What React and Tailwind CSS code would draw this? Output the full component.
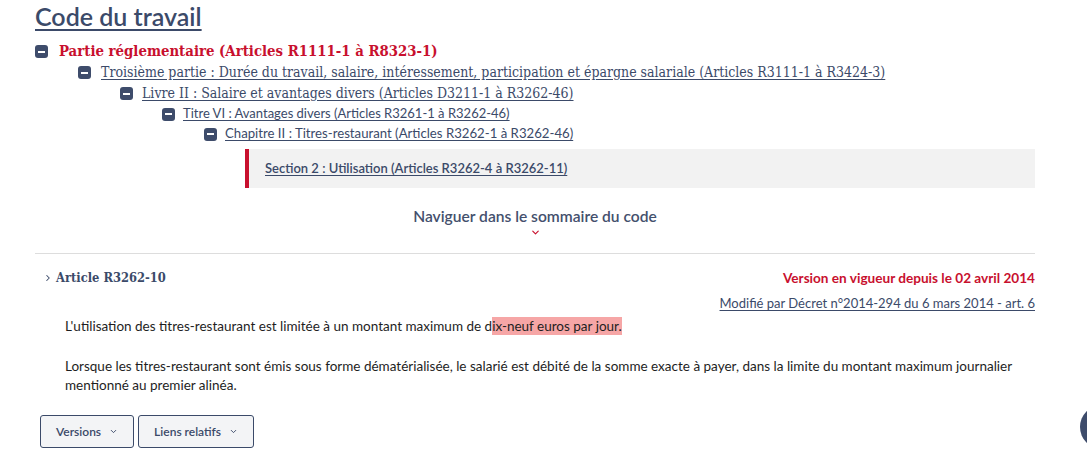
import { ChevronDown, ChevronRight } from 'lucide-react';

const sans = { fontFamily: 'Lato, "Liberation Sans", sans-serif' };
const slab = { fontFamily: '"DejaVu Serif Condensed", "DejaVu Serif", serif' };

function Toggle() {
  return (
    <span className="inline-flex items-center justify-center w-[13px] h-[13px] rounded-[3px] bg-[#3e4c6b] shrink-0">
      <span className="block w-[7px] h-[2px] bg-white" />
    </span>
  );
}

const tree = [
  { pad: 'pl-[43px]', gap: 'gap-[10px]', cls: 'text-[14px] h-[21px]', font: slab, label: 'Troisième partie : Durée du travail, salaire, intéressement, participation et épargne salariale (Articles R3111-1 à R3424-3)' },
  { pad: 'pl-[85px]', gap: 'gap-[9px]', cls: 'text-[14px] h-[21px]', font: slab, label: 'Livre II : Salaire et avantages divers (Articles D3211-1 à R3262-46)' },
  { pad: 'pl-[127px]', gap: 'gap-[8px]', cls: 'text-[13px] h-[20px]', font: sans, label: 'Titre VI : Avantages divers (Articles R3261-1 à R3262-46)' },
  { pad: 'pl-[169px]', gap: 'gap-[8px]', cls: 'text-[13.2px] h-[20px]', font: sans, label: 'Chapitre II : Titres-restaurant (Articles R3262-1 à R3262-46)' },
];

export default function App() {
  return (
    <div className="relative w-[1087px] h-[465px] overflow-hidden bg-white text-[#3b4a69]" style={sans}>
      <div className="w-[1000px] ml-[35px]">
        <h1 className="pt-[2px] text-[25px] leading-[29px] font-semibold underline decoration-[1.5px] underline-offset-[3px]">Code du travail</h1>

        {/* sommaire */}
        <div className="mt-[10px]">
          <div className="flex items-center gap-[11px] h-[21px]">
            <Toggle />
            <span className="text-[14.8px] font-bold text-[#c8102e]" style={slab}>Partie réglementaire (Articles R1111-1 à R8323-1)</span>
          </div>
          {tree.map((t) => (
            <div key={t.label} className={`flex items-center ${t.pad} ${t.gap} ${t.cls}`}>
              <Toggle />
              <span className="underline underline-offset-2 text-[#3b4a69]" style={t.font}>{t.label}</span>
            </div>
          ))}
          <div className="ml-[210px] mt-[5px] h-[39px] flex items-center bg-[#f2f2f2] border-l-4 border-[#c8102e] pl-4">
            <span className="text-[13px] font-semibold underline underline-offset-2">Section 2 : Utilisation (Articles R3262-4 à R3262-11)</span>
          </div>
        </div>

        <div className="flex flex-col items-center mt-[18px]">
          <span className="text-[15.6px] font-semibold leading-[20px] text-[#44506d]">Naviguer dans le sommaire du code</span>
          <ChevronDown size={11} strokeWidth={2.5} className="text-[#c8102e] mt-[1px]" />
        </div>

        <div className="mt-[15px] border-t border-[#dddddd]" />

        {/* article */}
        <div className="flex items-start justify-between mt-[14px]">
          <div className="flex items-center gap-[3px] ml-[8px]">
            <ChevronRight size={10} strokeWidth={2.5} />
            <span className="text-[12.8px] font-bold" style={slab}>Article R3262-10</span>
          </div>
          <div className="flex flex-col items-end">
            <span className="text-[13.6px] font-bold text-[#c8102e] leading-[20px]">Version en vigueur depuis le 02 avril 2014</span>
            <span className="mt-[5px] text-[13px] leading-[20px] underline underline-offset-2">Modifié par Décret n°2014-294 du 6 mars 2014 - art. 6</span>
          </div>
        </div>

        <div className="pl-[30px] text-[13.5px] leading-[19px] text-[#1e1e1e] mt-[4px]">
          <p>
            L'utilisation des titres-restaurant est limitée à un montant maximum de d
            <span className="bg-[#f6a6a6] py-[1px]">ix-neuf euros par jour.</span>
          </p>
          <p className="mt-[21px]">
            Lorsque les titres-restaurant sont émis sous forme dématérialisée, le salarié est débité de la somme exacte à payer, dans la limite du montant maximum journalier mentionné au premier alinéa.
          </p>
        </div>

        <div className="flex gap-[4px] mt-[20px] ml-[5px]">
          <button className="flex items-center gap-[8px] h-[33px] px-[15px] border border-[#3b4a69] rounded-[3px] bg-[#f3f4f6] text-[12px] font-semibold">
            Versions <ChevronDown size={9} strokeWidth={2.5} />
          </button>
          <button className="flex items-center gap-[8px] h-[33px] px-[15px] border border-[#3b4a69] rounded-[3px] bg-[#f3f4f6] text-[12px] font-semibold">
            Liens relatifs <ChevronDown size={9} strokeWidth={2.5} />
          </button>
        </div>
      </div>

      <div className="absolute left-[1080px] top-[405px] w-[44px] h-[44px] rounded-full bg-[#3e4c6b]" />
    </div>
  );
}
